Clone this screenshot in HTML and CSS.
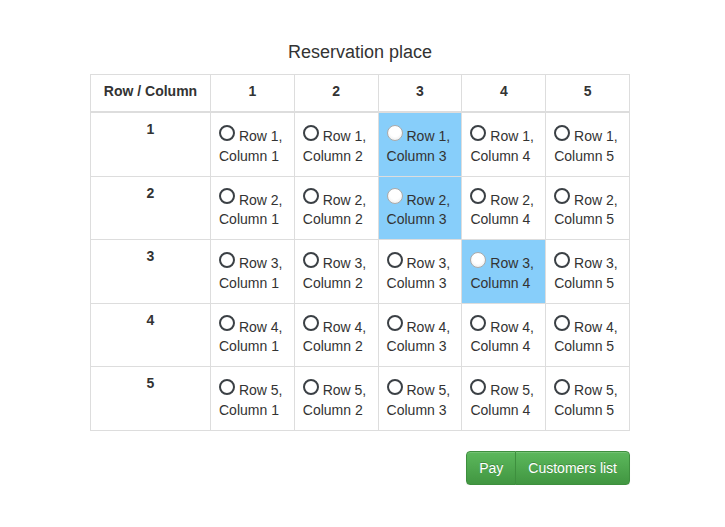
FILE: index.html
```html
<!DOCTYPE html>
<html>
<head>
<meta charset="utf-8">
<link rel="stylesheet" href="styles.css">
</head>
<body>
<div class="container">
  <div class="title">Reservation place</div>
  <table class="grid">
    <thead>
      <tr>
        <th class="corner">Row / Column</th>
        <th>1</th><th>2</th><th>3</th><th>4</th><th>5</th>
      </tr>
    </thead>
    <tbody>
      <tr>
        <th>1</th>
        <td><span class="radio"></span> Row 1, Column 1</td>
        <td><span class="radio"></span> Row 1, Column 2</td>
        <td class="taken"><span class="radio"></span> Row 1, Column 3</td>
        <td><span class="radio"></span> Row 1, Column 4</td>
        <td><span class="radio"></span> Row 1, Column 5</td>
      </tr>
      <tr>
        <th>2</th>
        <td><span class="radio"></span> Row 2, Column 1</td>
        <td><span class="radio"></span> Row 2, Column 2</td>
        <td class="taken"><span class="radio"></span> Row 2, Column 3</td>
        <td><span class="radio"></span> Row 2, Column 4</td>
        <td><span class="radio"></span> Row 2, Column 5</td>
      </tr>
      <tr>
        <th>3</th>
        <td><span class="radio"></span> Row 3, Column 1</td>
        <td><span class="radio"></span> Row 3, Column 2</td>
        <td><span class="radio"></span> Row 3, Column 3</td>
        <td class="taken"><span class="radio"></span> Row 3, Column 4</td>
        <td><span class="radio"></span> Row 3, Column 5</td>
      </tr>
      <tr>
        <th>4</th>
        <td><span class="radio"></span> Row 4, Column 1</td>
        <td><span class="radio"></span> Row 4, Column 2</td>
        <td><span class="radio"></span> Row 4, Column 3</td>
        <td><span class="radio"></span> Row 4, Column 4</td>
        <td><span class="radio"></span> Row 4, Column 5</td>
      </tr>
      <tr>
        <th>5</th>
        <td><span class="radio"></span> Row 5, Column 1</td>
        <td><span class="radio"></span> Row 5, Column 2</td>
        <td><span class="radio"></span> Row 5, Column 3</td>
        <td><span class="radio"></span> Row 5, Column 4</td>
        <td><span class="radio"></span> Row 5, Column 5</td>
      </tr>
    </tbody>
  </table>
  <div class="actions">
    <div class="btn-group">
      <button class="btn">Pay</button><button class="btn">Customers list</button>
    </div>
  </div>
</div>
</body>
</html>
```

FILE: styles.css
```css
html, body {
  margin: 0;
  padding: 0;
  background: #fff;
}
body {
  font-family: "Liberation Sans", Arial, sans-serif;
  font-size: 14px;
  line-height: 20px;
  color: #333;
}
.container {
  width: 540px;
  padding: 42px 0 0 90px;
}
.title {
  font-size: 18px;
  line-height: 20px;
  text-align: center;
  margin-bottom: 12px;
}
.grid {
  width: 540px;
  border-collapse: collapse;
  border-spacing: 0;
  table-layout: fixed;
  margin-bottom: 20px;
  border: 1px solid #ddd;
}
.grid th, .grid td {
  border: 1px solid #ddd;
  padding: 6px 8px 10px 8px;
  line-height: 20px;
  vertical-align: top;
}
.grid thead th {
  border-bottom: 2px solid #ddd;
  vertical-align: bottom;
  text-align: center;
  font-weight: bold;
}
.grid thead th.corner {
  width: 103px;
}
.grid tbody th {
  text-align: center;
  font-weight: bold;
}
.grid td {
  text-align: left;
}
.grid td.taken {
  background: #87cefa;
}
.radio {
  display: inline-block;
  box-sizing: border-box;
  width: 16px;
  height: 16px;
  margin-top: 5.5px;
  border: 2px solid #3b4045;
  border-radius: 50%;
  background: #fff;
  vertical-align: baseline;
}
.taken .radio {
  border: 1px solid #a9a9a9;
  background: radial-gradient(circle at 50% 40%, #fff 0%, #fff 45%, #e6e6e6 100%);
}
.actions {
  display: flex;
  justify-content: flex-end;
}
.btn-group {
  display: flex;
}
.btn {
  font-family: "Liberation Sans", Arial, sans-serif;
  font-size: 14px;
  line-height: 20px;
  padding: 6px 12px;
  color: #fff;
  border: 1px solid #3e8f3e;
  background-image: linear-gradient(to bottom, #5cb85c 0%, #419641 100%);
  text-shadow: 0 -1px 0 rgba(0, 0, 0, 0.2);
  box-shadow: inset 0 1px 0 rgba(255, 255, 255, 0.15), 0 1px 1px rgba(0, 0, 0, 0.075);
  cursor: pointer;
}
.btn:first-child {
  border-radius: 4px 0 0 4px;
}
.btn + .btn {
  margin-left: -1px;
  border-radius: 0 4px 4px 0;
}
```
